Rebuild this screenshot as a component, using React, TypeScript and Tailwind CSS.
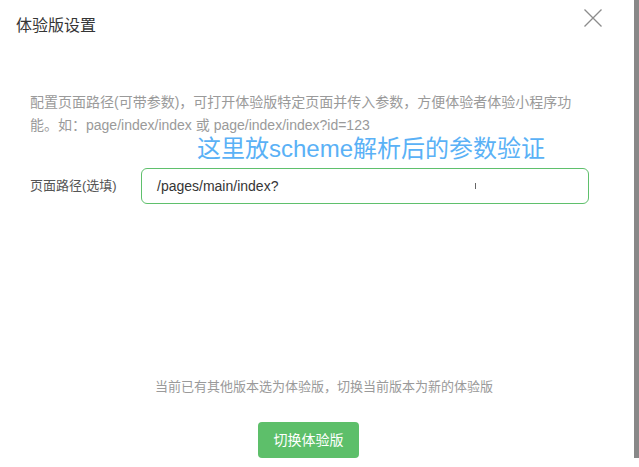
const cn = '"Liberation Sans", "Noto Sans CJK SC", sans-serif';

export default function App() {
  return (
    <div className="flex h-[467px] w-[639px] bg-white" style={{ fontFamily: cn }}>
      <div className="flex flex-1 flex-col">
        {/* Header */}
        <div className="flex h-[52px] items-start justify-between pl-4 pr-[32px] pt-[14px]">
          <h1 className="text-[16px] leading-[24px] text-[#353535]">体验版设置</h1>
          <svg className="mt-[-5px]" width="18" height="18" viewBox="0 0 18 18" fill="none" stroke="#8c8c8c" strokeWidth="1.3">
            <path d="M0.5 0.5 L17.5 17.5 M17.5 0.5 L0.5 17.5" />
          </svg>
        </div>

        {/* Body */}
        <div className="px-[30px] pt-[39px]">
          <p className="w-[548px] text-[14px] leading-[23px] text-[#9a9a9a]">
            配置页面路径(可带参数)，可打开体验版特定页面并传入参数，方便体验者体验小程序功能。如：page/index/index 或 page/index/index?id=123
          </p>
          <p className="mt-[-2px] pl-[167px] text-[24px] leading-[27px] text-[#5ab1f6]">这里放scheme解析后的参数验证</p>

          <div className="mt-[6px] flex items-center">
            <label className="w-[111px] text-[13px] text-[#555]">页面路径(选填)</label>
            <div className="flex h-[36px] w-[448px] items-center rounded-[6px] border border-[#5fc06c] px-[15px] text-[14px] text-[#353535]">
              /pages/main/index?
              <span className="ml-[197px] h-[6px] w-px bg-[#666]" />
            </div>
          </div>
        </div>

        {/* Footer */}
        <div className="mt-auto flex flex-col items-center pb-[9px]">
          <p className="ml-[14px] text-[13px] text-[#9a9a9a]">当前已有其他版本选为体验版，切换当前版本为新的体验版</p>
          <button className="mr-[17px] mt-[26px] h-[36px] w-[101px] rounded-[4px] bg-[#5dbf6a] text-[14px] text-white">
            切换体验版
          </button>
        </div>
      </div>
      <div className="h-[458px] w-[5px] bg-[#888]" />
    </div>
  );
}
